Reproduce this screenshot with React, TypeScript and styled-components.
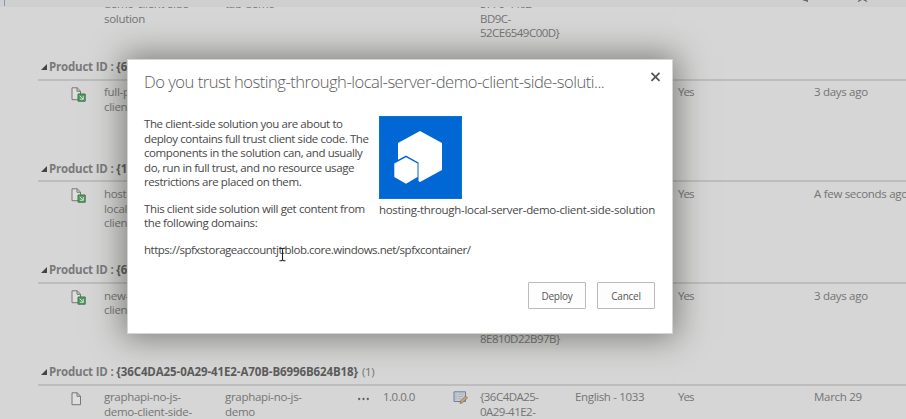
import React from "react";
import styled, { createGlobalStyle } from "styled-components";

const GlobalStyle = createGlobalStyle`
  * { box-sizing: border-box; }
  body {
    margin: 0;
    overflow: hidden;
    background: #d6d6d6;
    font-family: "Open Sans", "Noto Sans", sans-serif;
    font-size: 11.5px;
    line-height: 14.6px;
  }
  p, h1, h2 { margin: 0; font-weight: inherit; font-size: inherit; }
`;

const Page = styled.div`
  position: relative;
  display: flex;
  flex-direction: column;
  width: 906px;
  height: 419px;
  overflow: hidden;
`;

const TopBar = styled.div`
  display: flex;
  flex: none;
  height: 7px;
  padding-left: 4px;
  background: #cfcfcf;
  color: #666;
`;

const BarAccent = styled.div`
  width: 1px;
  height: 6px;
  background: #7c9cc4;
`;

const BarIcons = styled.svg`
  display: block;
  margin-left: 797px;
  width: 68px;
  height: 7px;
`;

const List = styled.div`
  flex: 1;
  min-height: 0;
  overflow: hidden;
  padding-left: 38px;
  color: #747474;
`;

const Row = styled.div<{ $first?: boolean }>`
  display: grid;
  grid-template-columns: 66px 121px 132px 26px 70px 27px 95px 103px 136px 100px;
  height: ${(p) => (p.$first ? "58.8px" : "77px")};
  margin-top: ${(p) => (p.$first ? "-9.8px" : "0")};
  padding-top: ${(p) => (p.$first ? "0" : "4.6px")};
`;

const Cell = styled.div<{ $tracking?: number }>`
  white-space: pre;
  letter-spacing: ${(p) => p.$tracking ?? -0.3}px;
`;

const IconCell = styled.div<{ $left: number; $top: number }>`
  padding: ${(p) => p.$top}px 0 0 ${(p) => p.$left}px;
  svg { display: block; }
`;

const GroupHeader = styled.div`
  display: flex;
  align-items: center;
  height: 24.7px;
  padding: 0 0 0 3px;
  border-bottom: 2px solid #bdbdbd;
  font-weight: 700;
  white-space: pre;
`;

const Caret = styled.svg`
  width: 6px;
  height: 6px;
  margin: 0 2px 1px 0;
`;

const GroupLabel = styled.span`
  color: #7a7a7a;
  letter-spacing: -0.2px;
`;

const GroupValue = styled.span`
  color: #5c5c5c;
  letter-spacing: -0.1px;
`;

const GroupCount = styled.span`
  margin-left: 4px;
  font-weight: 400;
  letter-spacing: -0.3px;
`;

const Dialog = styled.section`
  position: absolute;
  left: 127px;
  top: 59px;
  display: flex;
  flex-direction: column;
  width: 546px;
  height: 275px;
  padding: 11px 17px 0 16px;
  border: 1px solid #d5d5d5;
  background: #fff;
  box-shadow: 0 0 30px 4px rgba(45, 45, 35, 0.52);
  color: #484848;
`;

const DialogHeader = styled.header`
  display: flex;
  justify-content: space-between;
  height: 45px;
`;

const Title = styled.h1`
  font-size: 16.6px;
  font-weight: 300;
  line-height: 22px;
  letter-spacing: -0.51px;
  white-space: nowrap;
  color: #5c5c5c;
`;

const CloseButton = styled.button`
  width: 11px;
  height: 11px;
  margin: 0 -6px 0 0;
  padding: 0;
  border: 0;
  background: none;
  svg { display: block; }
`;

const Columns = styled.div`
  display: grid;
  grid-template-columns: 235px 278px;
  height: 166px;
`;

const Copy = styled.div`
  display: flex;
  flex-direction: column;
  gap: 11.7px;
  padding-top: 1px;
`;

const Line = styled.p<{ $tracking: number }>`
  white-space: pre;
  letter-spacing: ${(p) => p.$tracking}px;
`;

const Product = styled.div`
  svg { display: block; margin-bottom: 3.5px; }
`;

const Actions = styled.footer`
  display: flex;
  justify-content: flex-end;
  gap: 11px;
`;

const Button = styled.button`
  width: 58px;
  height: 27px;
  padding: 0;
  border: 1px solid #bababa;
  border-radius: 1px;
  background: #fdfdfd;
  color: #555;
  font: 10px "Open Sans", "Noto Sans", sans-serif;
  letter-spacing: -0.25px;
`;

const Pointer = styled.svg`
  position: absolute;
  left: 278px;
  top: 247px;
`;

const PackageIcon = ({ badge }: { badge?: boolean }) => (
  <svg width="16" height="16" viewBox="0 0 16 16">
    <path d="M1 .8h5.2l3.3 3.3v8.6H1zM6 .8v3.5h3.5" fill="#dedede" stroke="#777" strokeWidth="1" />
    {badge && (
      <>
        <path d="M7 7h7.2v7.2H7z" fill="#5b9a66" stroke="#3a7a46" />
        <path d="M8.7 8.7l3.5 3.5M12.3 9v3.3H9" stroke="#cfe0d1" strokeWidth="1" fill="none" />
      </>
    )}
  </svg>
);

const EditIcon = () => (
  <svg width="15" height="14" viewBox="0 0 15 14">
    <path d="M1 .8h11.5v9.7H1z" fill="#c4cbd5" stroke="#6f7f99" />
    <path d="M3 2.5v6.5M5 3.2h5.5M5 5.5h5M5 7.8h3" stroke="#a3aebd" strokeWidth=".8" />
    <path d="M7 12.5l.7-2.8 5-4.7 1.8 1.9-4.8 4.7z" fill="#c4a577" stroke="#806a4d" strokeWidth=".7" />
  </svg>
);

const DotsIcon = () => (
  <svg width="13" height="4" viewBox="0 0 13 4" fill="#606060">
    <circle cx="2.2" cy="2" r="1.15" />
    <circle cx="6.5" cy="2" r="1.15" />
    <circle cx="10.8" cy="2" r="1.15" />
  </svg>
);

type Item = {
  name: string;
  title?: string;
  version?: string;
  id?: string;
  language?: string;
  enabled: string;
  modified: string;
  local?: boolean;
};

const groups: { id: string; count?: number; item: Item }[] = [
  { id: "{6E", item: { name: "full-page-\nclient-side", enabled: "Yes", modified: "3 days ago", local: true } },
  { id: "{1E", item: { name: "hosting-\nlocal-server\nclient-side", enabled: "Yes", modified: "A few seconds ago", local: true } },
  { id: "{64", item: { name: "new-demo\nclient-side", id: "\n\n\n8E810D22B97B}", enabled: "Yes", modified: "3 days ago", local: true } },
  {
    id: "{36C4DA25-0A29-41E2-A70B-B6996B624B18}",
    count: 1,
    item: {
      name: "graphapi-no-js-\ndemo-client-side-",
      title: "graphapi-no-js-\ndemo",
      version: "1.0.0.0",
      id: "{36C4DA25-\n0A29-41E2-",
      language: "English - 1033",
      enabled: "Yes",
      modified: "March 29",
    },
  },
];

const ItemRow = ({ item }: { item: Item }) => (
  <Row>
    <IconCell $left={33} $top={1.5}><PackageIcon badge={item.local} /></IconCell>
    <Cell>{item.name}</Cell>
    <Cell>{item.title}</Cell>
    <IconCell $left={0} $top={7}>{item.version && <DotsIcon />}</IconCell>
    <Cell $tracking={-0.5}>{item.version}</Cell>
    <IconCell $left={0} $top={1}>{item.version && <EditIcon />}</IconCell>
    <Cell $tracking={-0.52}>{item.id}</Cell>
    <Cell $tracking={-0.35}>{item.language}</Cell>
    <Cell $tracking={-0.9}>{item.enabled}</Cell>
    <Cell>{item.modified}</Cell>
  </Row>
);

export default function App() {
  return (
    <>
      <GlobalStyle />
      <Page>
        <TopBar>
          <BarAccent />
          <BarIcons viewBox="0 0 68 7" fill="none" stroke="#666" strokeWidth="1.2">
            <path d="M1 0l5 1M5-2v4M56 1.5l4.5-2.5L65 1.5" />
          </BarIcons>
        </TopBar>
        <List>
          <Row $first>
            <span />
            <Cell>{"demo-client-side-\nsolution"}</Cell>
            <Cell>tab-demo</Cell>
            <span /><span /><span />
            <Cell $tracking={-0.52}>{"5776-4402-\nBD9C-\n52CE6549C00D}"}</Cell>
          </Row>
          {groups.map((group) => (
            <React.Fragment key={group.id}>
              <GroupHeader>
                <Caret viewBox="0 0 6 6"><path d="M6 0v6H0z" fill="#444" /></Caret>
                <GroupLabel>Product ID : </GroupLabel>
                <GroupValue>{group.id}</GroupValue>
                {group.count && <GroupCount>({group.count})</GroupCount>}
              </GroupHeader>
              <ItemRow item={group.item} />
            </React.Fragment>
          ))}
        </List>

        <Dialog role="dialog">
          <DialogHeader>
            <Title>Do you trust hosting-through-local-server-demo-client-side-soluti...</Title>
            <CloseButton aria-label="Close">
              <svg width="11" height="11" viewBox="0 0 11 11">
                <path d="M1.5 1.8l8 8M9.5 1.8l-8 8" stroke="#555" strokeWidth="1.8" />
              </svg>
            </CloseButton>
          </DialogHeader>
          <Columns>
            <Copy>
              <div>
                <Line $tracking={-0.41}>The client-side solution you are about to</Line>
                <Line $tracking={-0.41}>deploy contains full trust client side code. The</Line>
                <Line $tracking={-0.41}>components in the solution can, and usually</Line>
                <Line $tracking={-0.41}>do, run in full trust, and no resource usage</Line>
                <Line $tracking={-0.41}>restrictions are placed on them.</Line>
              </div>
              <div>
                <Line $tracking={-0.38}>This client side solution will get content from</Line>
                <Line $tracking={-0.38}>the following domains:</Line>
              </div>
              <Line $tracking={-0.48}>https://spfxstorageaccountjt.blob.core.windows.net/spfxcontainer/</Line>
            </Copy>
            <Product>
              <svg width="83" height="83" viewBox="0 0 83 83">
                <path d="M0 0h83v83H0z" fill="#0067d5" />
                <path d="M.5.5h82v82H.5z" fill="none" stroke="#0878cc" />
                <path d="M41 15l22 12v27L41 66l-22-12V27z" fill="#fff" />
                <path d="M27 39.5l12.5 7V66L27 72 14 68V46.5z" fill="#0067d5" />
                <path d="M27 41.3l11.5 6.3v13.4L27 67.8l-11.7-6.8V47.6z" fill="#fff" />
              </svg>
              <Line $tracking={-0.3}>hosting-through-local-server-demo-client-side-solution</Line>
            </Product>
          </Columns>
          <Actions>
            <Button>Deploy</Button>
            <Button>Cancel</Button>
          </Actions>
        </Dialog>
        <Pointer width="9" height="15" viewBox="0 0 9 15" fill="none" stroke="#222" strokeWidth="1.1">
          <path d="M1.5 1.2h2l1 .8 1-.8h2M4.5 2v10.8M1.5 13.7h2l1-.8 1 .8h2" />
        </Pointer>
      </Page>
    </>
  );
}
